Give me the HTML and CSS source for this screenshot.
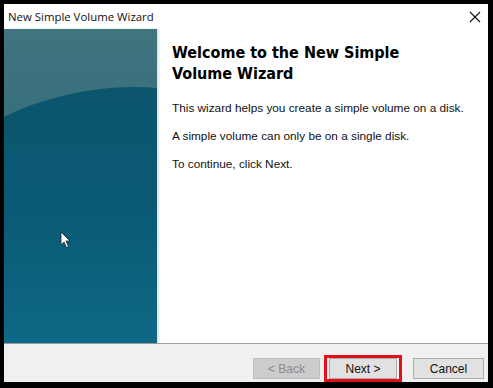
FILE: index.html
```html
<!DOCTYPE html>
<html lang="en">
<head>
    <meta charset="UTF-8">
    <title>New Simple Volume Wizard</title>
    <link rel="stylesheet" href="styles.css">
</head>
<body>
    <div class="window">
        <div class="titlebar">
            <span class="title">New Simple Volume Wizard</span>
            <svg class="close" width="12" height="12" viewBox="0 0 12 12">
                <path d="M1 1L11 11M11 1L1 11" stroke="#111" stroke-width="1.1"/>
            </svg>
        </div>
        <div class="main">
            <div class="side">
                <div class="side-dark"></div>
                <svg class="cursor" width="12" height="18" viewBox="0 0 12 18">
                    <path d="M1 1L1 14L4 11L6.5 16.5L8.5 15.5L6 10L10 10Z" fill="#fff" stroke="#222" stroke-width="0.8"/>
                </svg>
            </div>
            <div class="content">
                <h1>Welcome to the New Simple Volume Wizard</h1>
                <p>This wizard helps you create a simple volume on a disk.</p>
                <p>A simple volume can only be on a single disk.</p>
                <p>To continue, click Next.</p>
            </div>
        </div>
        <div class="footer">
            <button class="btn" disabled>&lt; Back</button>
            <div class="highlight">
                <button class="btn">Next &gt;</button>
            </div>
            <button class="btn cancel">Cancel</button>
        </div>
    </div>
</body>
</html>
```

FILE: styles.css
```css
body {
    margin: 0;
    background-color: #000;
    font-family: "Liberation Sans", Arial, sans-serif;
    width: 493px;
    height: 388px;
    overflow: hidden;
}
.window {
    margin: 4px 5px 6px 4px;
    height: 378px;
    background-color: #f0f0f0;
    display: flex;
    flex-direction: column;
}
.titlebar {
    height: 25px;
    background-color: #fff;
    display: flex;
    align-items: center;
    justify-content: space-between;
    padding: 0 7px 0 4px;
}
.title {
    font-family: "Open Sans", "Noto Sans", sans-serif;
    font-size: 11.4px;
    color: #111;
}
.main {
    height: 314px;
    display: flex;
    border-bottom: 1px solid #a0a0a0;
}
.side {
    width: 153px;
    position: relative;
    overflow: hidden;
    background: linear-gradient(180deg, #40757f 0%, #326c7b 50%, #276476 100%);
    box-shadow: 2px 0 2px rgba(0, 0, 0, 0.12);
}
.side-dark {
    position: absolute;
    left: -220px;
    top: 58px;
    width: 700px;
    height: 830px;
    border-radius: 50%;
    background: linear-gradient(180deg, #0b556d 0%, #0a5a75 15%, #0e6a87 32%);
}
.cursor {
    position: absolute;
    left: 56px;
    top: 202px;
}
.content {
    flex: 1;
    background-color: #fff;
    padding: 13px 10px 0 15px;
}
h1 {
    font-family: "DejaVu Sans Condensed", "DejaVu Sans", Verdana, sans-serif;
    font-stretch: semi-condensed;
    font-size: 16px;
    font-weight: bold;
    line-height: 21px;
    margin: 0 0 17px;
    color: #000;
    width: 245px;
}
p {
    font-size: 11.8px;
    line-height: 14px;
    margin: 0 0 14px;
    color: #111;
}
.footer {
    flex: 1;
    display: flex;
    align-items: flex-end;
    padding: 0 4px 3px 249px;
    gap: 4px;
}
.btn {
    font-family: "Liberation Sans", Arial, sans-serif;
    font-size: 12px;
    width: 68px;
    height: 21px;
    background-color: #e1e1e1;
    border: 1px solid #adadad;
    color: #111;
    padding: 0;
}
.btn:disabled {
    background-color: #ccc;
    border-color: #bfbfbf;
    color: #8a8a8a;
}
.highlight {
    border: 3px solid #e0101a;
    padding: 0 2px;
    margin-bottom: -3px;
}
.cancel {
    margin-left: 7px;
    width: 72px;
}
```
